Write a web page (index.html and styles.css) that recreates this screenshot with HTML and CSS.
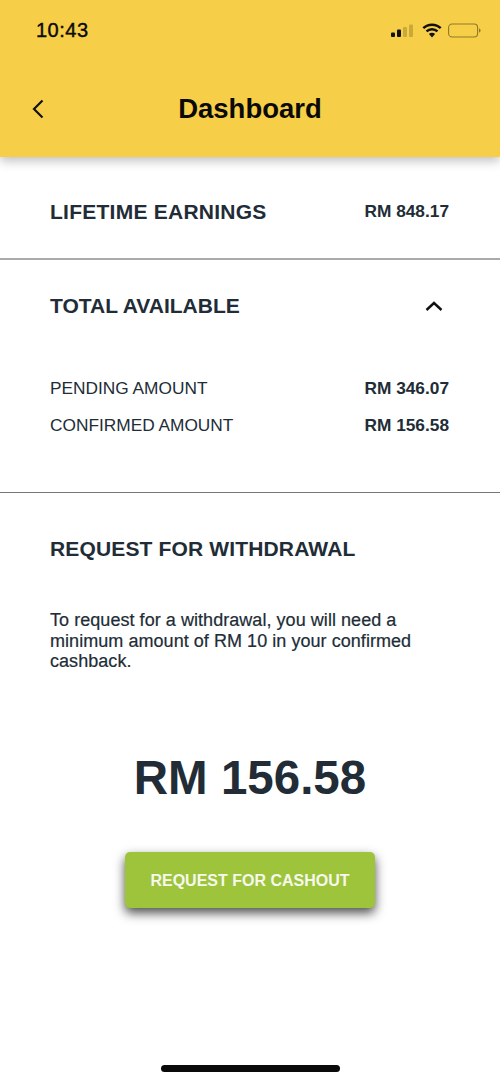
FILE: index.html
```html
<!DOCTYPE html>
<html>

<head>
    <meta charset="UTF-8">
    <meta name="viewport" content="width=device-width, initial-scale=1.0">
    <title>Dashboard</title>

    <link rel="stylesheet" href="styles.css">
</head>

<body>
    <div class="top-bar">
        <div class="status-bar">
            <span class="time">10:43</span>
            <div class="status-icons">
                <svg width="25" height="14" viewBox="0 0 25 14">
                    <rect x="0" y="8.500" width="4" height="4.500" rx="1" fill="#111"/>
                    <rect x="6" y="5.500" width="4" height="7.500" rx="1" fill="#111"/>
                    <rect x="12" y="3" width="4" height="10" rx="1" fill="#c9a93a"/>
                    <rect x="18" y="0.500" width="4" height="12.500" rx="1" fill="#c9a93a"/>
                </svg>
                <svg width="20" height="15" viewBox="0 0 20 15">
                    <path d="M1.300 5.200a12.400 12.400 0 0 1 17.400 0" fill="none" stroke="#111" stroke-width="2.500"/>
                    <path d="M4.500 8.400a7.800 7.800 0 0 1 11 0" fill="none" stroke="#111" stroke-width="2.500"/>
                    <path d="M6.900 11a4.300 4.300 0 0 1 6.200 0L10 14.400z" fill="#111"/>
                </svg>
                <svg width="33" height="15" viewBox="0 0 33 15">
                    <rect x="0.600" y="1" width="29" height="13" rx="3.500" fill="none" stroke="#8f7a2a" stroke-width="1.100"/>
                    <path d="M31 5.500c1.200.4 1.600 1.200 1.600 2s-.4 1.600-1.600 2z" fill="#8f7a2a"/>
                </svg>
            </div>
        </div>
        <div class="nav-bar">
            <svg class="back-icon" width="14" height="22" viewBox="0 0 14 22">
                <path d="M11.500 2.500L3 11l8.500 8.500" fill="none" stroke="#111" stroke-width="2.200"/>
            </svg>
            <h1>Dashboard</h1>
        </div>
    </div>

    <div class="row-lifetime">
        <span class="row-title">LIFETIME EARNINGS</span>
        <span class="amount">RM 848.17</span>
    </div>

    <div class="section-total">
        <div class="row-total">
            <span class="row-title">TOTAL AVAILABLE</span>
            <svg class="chevron-up" width="18" height="11" viewBox="0 0 18 11">
                <path d="M1.500 9L9 2l7.500 7" fill="none" stroke="#111" stroke-width="2.400"/>
            </svg>
        </div>
        <div class="row-small row-pending">
            <span>PENDING AMOUNT</span>
            <span class="amount">RM 346.07</span>
        </div>
        <div class="row-small">
            <span>CONFIRMED AMOUNT</span>
            <span class="amount">RM 156.58</span>
        </div>
    </div>

    <div class="section-request">
        <h2>REQUEST FOR WITHDRAWAL</h2>
        <p>To request for a withdrawal, you will need a minimum amount of RM 10 in your confirmed cashback.</p>
        <div class="big-amount">RM 156.58</div>
        <button class="cashout-btn">REQUEST FOR CASHOUT</button>
    </div>

    <div class="home-indicator"></div>
</body>

</html>
```

FILE: styles.css
```css
* {
    box-sizing: border-box;
}

html,
body {
    height: 100%;
}

body {
    margin: 0;
    font-family: "Liberation Sans", Arial, sans-serif;
    color: #212c36;
    background-color: white;
    display: flex;
    flex-direction: column;
    overflow: hidden;
}

.top-bar {
    height: 157px;
    background-color: #f7ce48;
    color: #0a0a0a;
    box-shadow: 0 4px 10px rgba(0, 0, 0, 0.25);
    padding-top: 19px;
}

.status-bar {
    display: flex;
    justify-content: space-between;
    align-items: center;
    height: 23px;
    padding: 0 19px 0 36px;
}

.time {
    font-size: 20px;
    letter-spacing: 0.5px;
    -webkit-text-stroke: 0.4px #0a0a0a;
}

.status-icons {
    display: flex;
    align-items: center;
    gap: 6px;
}

.nav-bar {
    display: flex;
    align-items: center;
    justify-content: center;
    position: relative;
    margin-top: 32px;
    height: 70px;
}

.back-icon {
    position: absolute;
    left: 31px;
    top: 24px;
}

.nav-bar h1 {
    margin: 0;
    font-size: 27.500px;
    font-weight: bold;
}

.row-lifetime,
.row-total,
.row-small {
    display: flex;
    justify-content: space-between;
    align-items: center;
}

.row-lifetime {
    height: 103px;
    padding: 8px 50px 0;
    border-bottom: 2px solid #aaa;
}

.row-title {
    font-size: 21px;
    font-weight: bold;
}

.row-lifetime .row-title {
    letter-spacing: 0.25px;
}

.amount {
    font-size: 17.300px;
    font-weight: bold;
    margin-right: 1px;
}

.section-total {
    height: 233px;
    padding: 0 50px;
    border-bottom: 1px solid #777;
}

.row-total {
    height: 92px;
    padding-right: 7px;
}

.row-small {
    height: 37px;
    font-size: 17.300px;
}

.row-pending {
    margin-top: 18px;
}

.section-request {
    padding: 0 50px;
}

.section-request h2 {
    margin: 45px 0 0;
    font-size: 21px;
    line-height: 22px;
    letter-spacing: 0.15px;
}

.section-request p {
    margin: 50px 0 0;
    font-size: 18px;
    line-height: 20.500px;
    letter-spacing: 0.05px;
    -webkit-text-stroke: 0.2px #212c36;
}

.big-amount {
    margin-top: 78px;
    font-size: 47.500px;
    font-weight: bold;
    line-height: 56px;
    text-align: center;
}

.cashout-btn {
    display: block;
    width: 250px;
    height: 56px;
    margin: 46px auto 0;
    padding: 2px 0 0;
    background-color: #9dc43b;
    color: #f6f8ee;
    border: none;
    border-radius: 5px;
    font-family: inherit;
    font-size: 16px;
    font-weight: bold;
    box-shadow: 0 5px 11px rgba(0, 0, 0, 0.7);
}

.home-indicator {
    position: absolute;
    left: 161px;
    top: 1065px;
    width: 179px;
    height: 7px;
    border-radius: 4px;
    background-color: #0a0a0a;
}
```
